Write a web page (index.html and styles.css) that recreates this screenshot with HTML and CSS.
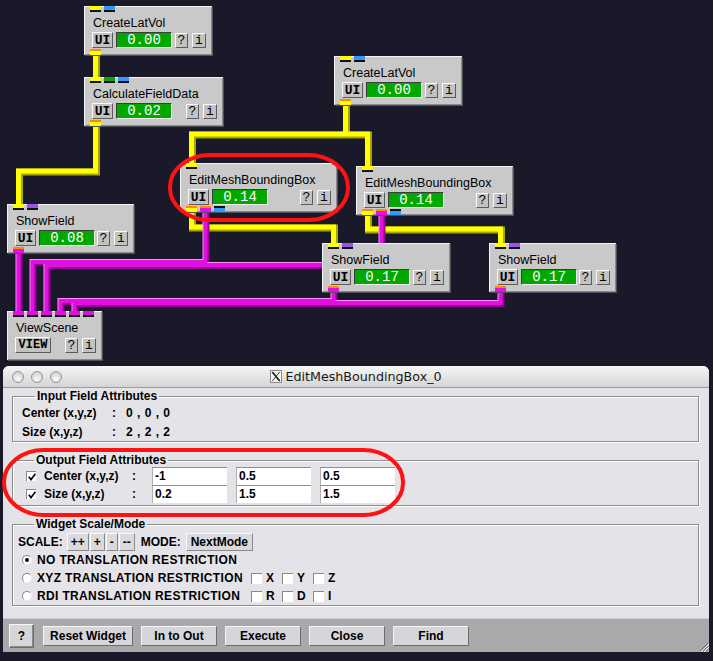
FILE: index.html
```html
<!DOCTYPE html>
<html>
<head>
<meta charset="utf-8">
<title>SCIRun network</title>
<link rel="stylesheet" href="styles.css">
</head>
<body>
<div class="canvas">
  <svg class="pipes" width="713" height="661" viewBox="0 0 713 661">
    <g class="yl-dark" transform="translate(1,1)">
      <path d="M95.5 52 V80"/>
      <path d="M95.5 122 V171 H18.5 V207"/>
      <path d="M345.5 102 V134 H191.5 V166 M345.5 134 H367.5 V169"/>
      <path d="M191.5 209 V227 H333.5 V246"/>
      <path d="M367.5 212 V229 H500.5 V246"/>
    </g>
    <g class="yl">
      <path d="M95.5 52 V80"/>
      <path d="M95.5 122 V171 H18.5 V207"/>
      <path d="M345.5 102 V134 H191.5 V166 M345.5 134 H367.5 V169"/>
      <path d="M191.5 209 V227 H333.5 V246"/>
      <path d="M367.5 212 V229 H500.5 V246"/>
    </g>
    <g class="mg-dark" transform="translate(1,1)">
      <path d="M18.5 250 V314"/>
      <path d="M205.5 209 V262 H32.5 V314"/>
      <path d="M381.5 212 V265 H46.5 V314"/>
      <path d="M333.5 289 V301 H60.5 V314"/>
      <path d="M500.5 289 V303 H74.5 V314"/>
    </g>
    <g class="mg-hi" transform="translate(-1,-1)">
      <path d="M18.5 250 V314"/>
      <path d="M205.5 209 V262 H32.5 V314"/>
      <path d="M381.5 212 V265 H46.5 V314"/>
      <path d="M333.5 289 V301 H60.5 V314"/>
      <path d="M500.5 289 V303 H74.5 V314"/>
    </g>
    <g class="mg">
      <path d="M18.5 250 V314"/>
      <path d="M205.5 209 V262 H32.5 V314"/>
      <path d="M381.5 212 V265 H46.5 V314"/>
      <path d="M333.5 289 V301 H60.5 V314"/>
      <path d="M500.5 289 V303 H74.5 V314"/>
    </g>
  </svg>

  <div class="module m-clv1">
    <div class="ports"><span class="port in c-yellow"></span><span class="port in c-blue"></span></div>
    <div class="mtitle">CreateLatVol</div>
    <div class="controls"><span class="mbtn ui">UI</span><span class="meter">0.00</span><span class="mbtn help">?</span><span class="mbtn info">i</span></div>
    <div class="ports out"><span class="port out conn c-yellow"></span></div>
  </div>

  <div class="module m-cfd">
    <div class="ports"><span class="port in c-yellow"></span><span class="port in c-green"></span><span class="port in c-blue"></span></div>
    <div class="mtitle">CalculateFieldData</div>
    <div class="controls"><span class="mbtn ui">UI</span><span class="meter">0.02</span><span class="mbtn help">?</span><span class="mbtn info">i</span></div>
    <div class="ports out"><span class="port out conn c-yellow"></span></div>
  </div>

  <div class="module m-clv2">
    <div class="ports"><span class="port in c-yellow"></span><span class="port in c-blue"></span></div>
    <div class="mtitle">CreateLatVol</div>
    <div class="controls"><span class="mbtn ui">UI</span><span class="meter">0.00</span><span class="mbtn help">?</span><span class="mbtn info">i</span></div>
    <div class="ports out"><span class="port out conn c-yellow"></span></div>
  </div>

  <div class="module m-embb1">
    <div class="ports"><span class="port in c-yellow"></span></div>
    <div class="mtitle">EditMeshBoundingBox</div>
    <div class="controls"><span class="mbtn ui">UI</span><span class="meter">0.14</span><span class="mbtn help">?</span><span class="mbtn info">i</span></div>
    <div class="ports out"><span class="port out conn c-yellow"></span><span class="port out conn c-magenta"></span><span class="port out c-blue"></span></div>
  </div>

  <div class="module m-embb2">
    <div class="ports"><span class="port in c-yellow"></span></div>
    <div class="mtitle">EditMeshBoundingBox</div>
    <div class="controls"><span class="mbtn ui">UI</span><span class="meter">0.14</span><span class="mbtn help">?</span><span class="mbtn info">i</span></div>
    <div class="ports out"><span class="port out conn c-yellow"></span><span class="port out conn c-magenta"></span><span class="port out c-blue"></span></div>
  </div>

  <div class="module m-sf1">
    <div class="ports"><span class="port in c-yellow"></span><span class="port in c-purple"></span></div>
    <div class="mtitle">ShowField</div>
    <div class="controls"><span class="mbtn ui">UI</span><span class="meter">0.08</span><span class="mbtn help">?</span><span class="mbtn info">i</span></div>
    <div class="ports out"><span class="port out conn c-magenta"></span></div>
  </div>

  <div class="module m-sf2">
    <div class="ports"><span class="port in c-yellow"></span><span class="port in c-purple"></span></div>
    <div class="mtitle">ShowField</div>
    <div class="controls"><span class="mbtn ui">UI</span><span class="meter">0.17</span><span class="mbtn help">?</span><span class="mbtn info">i</span></div>
    <div class="ports out"><span class="port out conn c-magenta"></span></div>
  </div>

  <div class="module m-sf3">
    <div class="ports"><span class="port in c-yellow"></span><span class="port in c-purple"></span></div>
    <div class="mtitle">ShowField</div>
    <div class="controls"><span class="mbtn ui">UI</span><span class="meter">0.17</span><span class="mbtn help">?</span><span class="mbtn info">i</span></div>
    <div class="ports out"><span class="port out conn c-magenta"></span></div>
  </div>

  <div class="module m-vs">
    <div class="ports"><span class="port in c-magenta"></span><span class="port in c-magenta"></span><span class="port in c-magenta"></span><span class="port in c-magenta"></span><span class="port in c-magenta"></span><span class="port in c-magenta"></span></div>
    <div class="mtitle">ViewScene</div>
    <div class="controls"><span class="mbtn view">VIEW</span><span class="mbtn help">?</span><span class="mbtn info">i</span></div>
  </div>

  <div class="dialog">
    <div class="titlebar">
      <div class="lights"><span class="light"></span><span class="light"></span><span class="light"></span></div>
      <div class="wtitle">
        <svg class="xicon" width="12" height="13" viewBox="0 0 12 13">
          <rect x="0.5" y="0.5" width="11" height="12" fill="#f4f4f4" stroke="#8a8a8a"/>
          <path d="M2.3 2 L9.7 11" stroke="#222" stroke-width="1.8"/>
          <path d="M9.7 2 L2.3 11" stroke="#222" stroke-width="0.9"/>
        </svg>
        <span>EditMeshBoundingBox_0</span>
      </div>
      <div></div>
    </div>

    <div class="dbody">
      <fieldset class="frame f-input">
        <legend>Input Field Attributes</legend>
        <div class="kv">
          <span>Center (x,y,z)</span><span>:</span><span class="val">0 , 0 , 0</span>
          <span>Size (x,y,z)</span><span>:</span><span class="val">2 , 2 , 2</span>
        </div>
      </fieldset>

      <fieldset class="frame f-output">
        <legend>Output Field Attributes</legend>
        <div class="orow">
          <span class="check"><svg width="8" height="8" viewBox="0 0 8 8"><path d="M0.8 3.8 L3 6.6 L7.4 0.8" fill="none" stroke="#000" stroke-width="1.6"/></svg></span>
          <span class="olabel">Center (x,y,z)</span><span class="ocolon">:</span>
          <span class="entry">-1</span><span class="entry">0.5</span><span class="entry">0.5</span>
        </div>
        <div class="orow">
          <span class="check"><svg width="8" height="8" viewBox="0 0 8 8"><path d="M0.8 3.8 L3 6.6 L7.4 0.8" fill="none" stroke="#000" stroke-width="1.6"/></svg></span>
          <span class="olabel">Size (x,y,z)</span><span class="ocolon">:</span>
          <span class="entry">0.2</span><span class="entry">1.5</span><span class="entry">1.5</span>
        </div>
      </fieldset>

      <fieldset class="frame f-widget">
        <legend>Widget Scale/Mode</legend>
        <div class="scalerow">
          <span>SCALE:</span>
          <span class="tkbtns"><span class="tkbtn">++</span><span class="tkbtn">+</span><span class="tkbtn">-</span><span class="tkbtn">--</span></span>
          <span class="modelbl">MODE:</span>
          <span class="tkbtn next">NextMode</span>
        </div>
        <div class="radiorow"><span class="radio on"></span><span class="rlabel">NO TRANSLATION RESTRICTION</span></div>
        <div class="radiorow"><span class="radio"></span><span class="rlabel">XYZ TRANSLATION RESTRICTION</span>
          <span class="box"></span><span class="blabel">X</span><span class="box"></span><span class="blabel">Y</span><span class="box"></span><span class="blabel">Z</span></div>
        <div class="radiorow"><span class="radio"></span><span class="rlabel">RDI TRANSLATION RESTRICTION</span>
          <span class="box"></span><span class="blabel">R</span><span class="box"></span><span class="blabel">D</span><span class="box"></span><span class="blabel">I</span></div>
      </fieldset>
    </div>

    <div class="bar">
      <span class="bbtn qbtn">?</span>
      <span class="bbtn wide">Reset Widget</span>
      <span class="bbtn">In to Out</span>
      <span class="bbtn">Execute</span>
      <span class="bbtn">Close</span>
      <span class="bbtn">Find</span>
    </div>
    <svg class="grip" width="12" height="12" viewBox="0 0 12 12">
      <path d="M11 3 L3 11 M11 6 L6 11 M11 9 L9 11" stroke="#6a6a6a" stroke-width="1"/>
      <path d="M12 4 L4 12 M12 7 L7 12" stroke="#f4f4f4" stroke-width="1"/>
    </svg>
  </div>

  <svg class="marks" width="713" height="661" viewBox="0 0 713 661">
    <rect x="170" y="155" width="178" height="65" rx="40" ry="32"/>
    <rect x="4" y="450" width="399" height="65" rx="40" ry="32"/>
  </svg>
</div>
</body>
</html>
```

FILE: styles.css
```css
* { box-sizing: border-box; }
html, body { margin: 0; padding: 0; }
body {
  width: 713px;
  height: 661px;
  overflow: hidden;
  background: #19192a;
  font-family: "Liberation Sans", Arial, sans-serif;
}
.canvas {
  position: relative;
  width: 713px;
  height: 661px;
  background: #19192a;
  overflow: hidden;
}
.pipes, .marks { position: absolute; left: 0; top: 0; }
.marks { z-index: 5; pointer-events: none; }
.marks rect { fill: none; stroke: #ff1212; stroke-width: 4; }

.pipes path { fill: none; stroke-linejoin: miter; }
.yl-dark path { stroke: #a6a600; stroke-width: 7; }
.yl path { stroke: #ffff00; stroke-width: 5; }
.mg-dark path { stroke: #980098; stroke-width: 6; }
.mg-hi path { stroke: #ff8cff; stroke-width: 4; }
.mg path { stroke: #e010e0; stroke-width: 4; }

/* modules */
.module {
  position: absolute;
  height: 49px;
  display: flex;
  flex-direction: column;
  padding: 0 6px;
  background: #c9c9c9;
  box-shadow: inset 1px 1px 0 #f4f4f4, inset -1px -1px 0 #8a8a8a, 1px 1px 0 #505058;
}
.m-clv1 { left: 84px; top: 6px; width: 128px; }
.m-cfd { left: 84px; top: 77px; width: 139px; }
.m-clv2 { left: 334px; top: 56px; width: 128px; }
.m-embb1 { left: 180px; top: 163px; width: 157px; }
.m-embb2 { left: 356px; top: 166px; width: 157px; }
.m-sf1 { left: 7px; top: 204px; width: 127px; }
.m-sf2 { left: 322px; top: 243px; width: 128px; }
.m-sf3 { left: 489px; top: 243px; width: 127px; }
.m-vs { left: 7px; top: 311px; width: 95px; }

.ports { display: flex; gap: 3px; height: 6px; flex: none; }
.ports.out { margin-top: auto; }
.port { width: 11px; height: 6px; }
.port.in { border-bottom: 2px solid #101010; }
.port.out { border-top: 2px solid #101010; }
.port.conn { border-top-color: #ff8a00; }
.c-yellow { background: #ffff00; }
.c-blue { background: #3399ff; }
.c-green { background: #10a010; }
.c-magenta { background: #e010e0; }
.c-purple { background: #9a52e8; }

.mtitle {
  margin: 4px 0 0 3px;
  height: 15px;
  font-size: 12.5px;
  line-height: 15px;
  color: #000;
  white-space: nowrap;
}
.controls {
  display: flex;
  align-items: center;
  height: 16px;
  margin: 1px 0 0 2px;
}
.mbtn {
  display: flex;
  align-items: center;
  justify-content: center;
  height: 15px;
  background: #c2c2c2;
  border: 1px solid;
  border-color: #fafafa #5c5c5c #5c5c5c #fafafa;
  font-family: "Liberation Mono", monospace;
  font-size: 13px;
  color: #000;
}
.mbtn.ui { width: 21px; height: 16px; font-weight: bold; }
.mbtn.view { width: 36px; height: 16px; font-weight: bold; font-size: 12px; }
.mbtn.help { width: 13px; margin-left: auto; }
.mbtn.info { width: 14px; margin-left: 4px; }
.meter {
  width: 56px;
  height: 16px;
  margin-left: 3px;
  background: #00a800;
  border: 1px solid;
  border-color: #3c3c3c #f0f0f0 #f0f0f0 #3c3c3c;
  color: #fff;
  font-family: "Liberation Mono", monospace;
  font-size: 14px;
  line-height: 14px;
  text-align: center;
}

/* dialog window */
.dialog {
  position: absolute;
  left: 3px;
  top: 366px;
  width: 706px;
  height: 286px;
  display: flex;
  flex-direction: column;
  background: #e4e4e8;
  border-radius: 6px 6px 0 0;
  overflow: hidden;
  z-index: 2;
  color: #000;
}
.titlebar {
  flex: none;
  height: 22px;
  display: grid;
  grid-template-columns: 1fr auto 1fr;
  align-items: center;
  background: linear-gradient(#f6f6f6, #d4d4d4);
  border-bottom: 1px solid #9c9c9c;
}
.lights { display: flex; gap: 7px; padding-left: 9px; }
.light {
  width: 12px;
  height: 12px;
  border-radius: 50%;
  background: radial-gradient(circle at 50% 70%, #fbfbfb 0%, #d6d6d6 70%);
  border: 1px solid #959595;
}
.wtitle {
  display: flex;
  align-items: center;
  gap: 3px;
  font-family: "DejaVu Sans", sans-serif;
  font-size: 12.7px;
  color: #1a1a1a;
}
.xicon { display: block; }

.dbody { flex: none; padding: 1px 10px 0 9px; }
.frame {
  margin: 0;
  padding: 0;
  min-width: 0;
  border: 1px solid #8c8c8c;
  box-shadow: inset 1px 1px 0 #ffffff, 1px 1px 0 #ffffff;
}
.frame legend {
  margin-left: 21px;
  padding: 0 2px;
  font-size: 12px;
  line-height: 14px;
  font-weight: bold;
}
.f-input legend { margin-left: 22px; }
.f-output, .f-widget { margin-top: 11px; }

.kv {
  display: grid;
  grid-template-columns: 90px 14px auto;
  grid-auto-rows: 19px;
  align-items: center;
  padding-left: 9px;
  font-size: 12px;
  font-weight: bold;
}
.kv .val { white-space: pre; word-spacing: 1px; }

.f-output { padding-bottom: 2px; }
.orow {
  display: flex;
  align-items: center;
  height: 18px;
  padding-left: 13px;
  font-size: 12px;
  font-weight: bold;
}
.check {
  display: flex;
  align-items: center;
  justify-content: center;
  width: 10px;
  height: 10px;
  background: #fff;
  border-top: 1px solid #8a8a8a;
  border-left: 1px solid #8a8a8a;
}
.olabel { width: 88px; margin-left: 8px; white-space: nowrap; }
.ocolon { width: 20px; }
.entry {
  width: 75px;
  height: 18px;
  margin-right: 9px;
  padding: 1px 0 0 2px;
  background: #fff;
  border-top: 1px solid #8e8e8e;
  border-left: 1px solid #b0b0b0;
  font-size: 12px;
  line-height: 15px;
}

.f-widget { font-size: 12px; font-weight: bold; }
.scalerow {
  display: flex;
  align-items: center;
  height: 18px;
  margin-top: 2px;
  padding-left: 5px;
}
.tkbtns { display: flex; gap: 1px; margin-left: 4px; }
.tkbtn {
  display: flex;
  align-items: center;
  height: 18px;
  padding: 0 3px;
  background: #dadade;
  border: 1px solid;
  border-color: #fafafa #8a8a8a #8a8a8a #fafafa;
}
.modelbl { margin-left: 6px; }
.tkbtn.next { margin-left: 5px; padding: 0 4px; }
.radiorow {
  display: flex;
  align-items: center;
  height: 18px;
  padding-left: 9px;
}
.radio {
  position: relative;
  width: 10px;
  height: 10px;
  border-radius: 50%;
  background: #fff;
  border: 1px solid;
  border-color: #8a8a8a #ececec #ececec #8a8a8a;
}
.radio.on::after {
  content: "";
  position: absolute;
  left: 2px;
  top: 2px;
  width: 4px;
  height: 4px;
  border-radius: 50%;
  background: #000;
}
.rlabel { width: 214px; margin-left: 5px; letter-spacing: 0.35px; white-space: nowrap; }
.box {
  width: 11px;
  height: 11px;
  background: #fff;
  border-top: 1px solid #8a8a8a;
  border-left: 1px solid #8a8a8a;
}
.blabel { width: 16px; margin-left: 4px; }

.bar {
  margin-top: auto;
  flex: none;
  height: 34px;
  display: flex;
  align-items: center;
  gap: 8px;
  padding-left: 6px;
  background: #a9a9ac;
  border-top: 1px solid #cfcfd3;
}
.bbtn {
  display: flex;
  align-items: center;
  justify-content: center;
  width: 76px;
  height: 20px;
  background: #d6d6da;
  border: 1px solid;
  border-color: #f6f6f6 #6c6c6c #6c6c6c #f6f6f6;
  font-size: 12px;
  font-weight: bold;
}
.bbtn.wide { width: 90px; }
.bbtn.qbtn {
  width: 25px;
  height: 24px;
  margin-right: 1px;
  box-shadow: inset -1px -1px 0 #8a8a8a;
}
.grip { position: absolute; right: 0; bottom: 0; }
```
